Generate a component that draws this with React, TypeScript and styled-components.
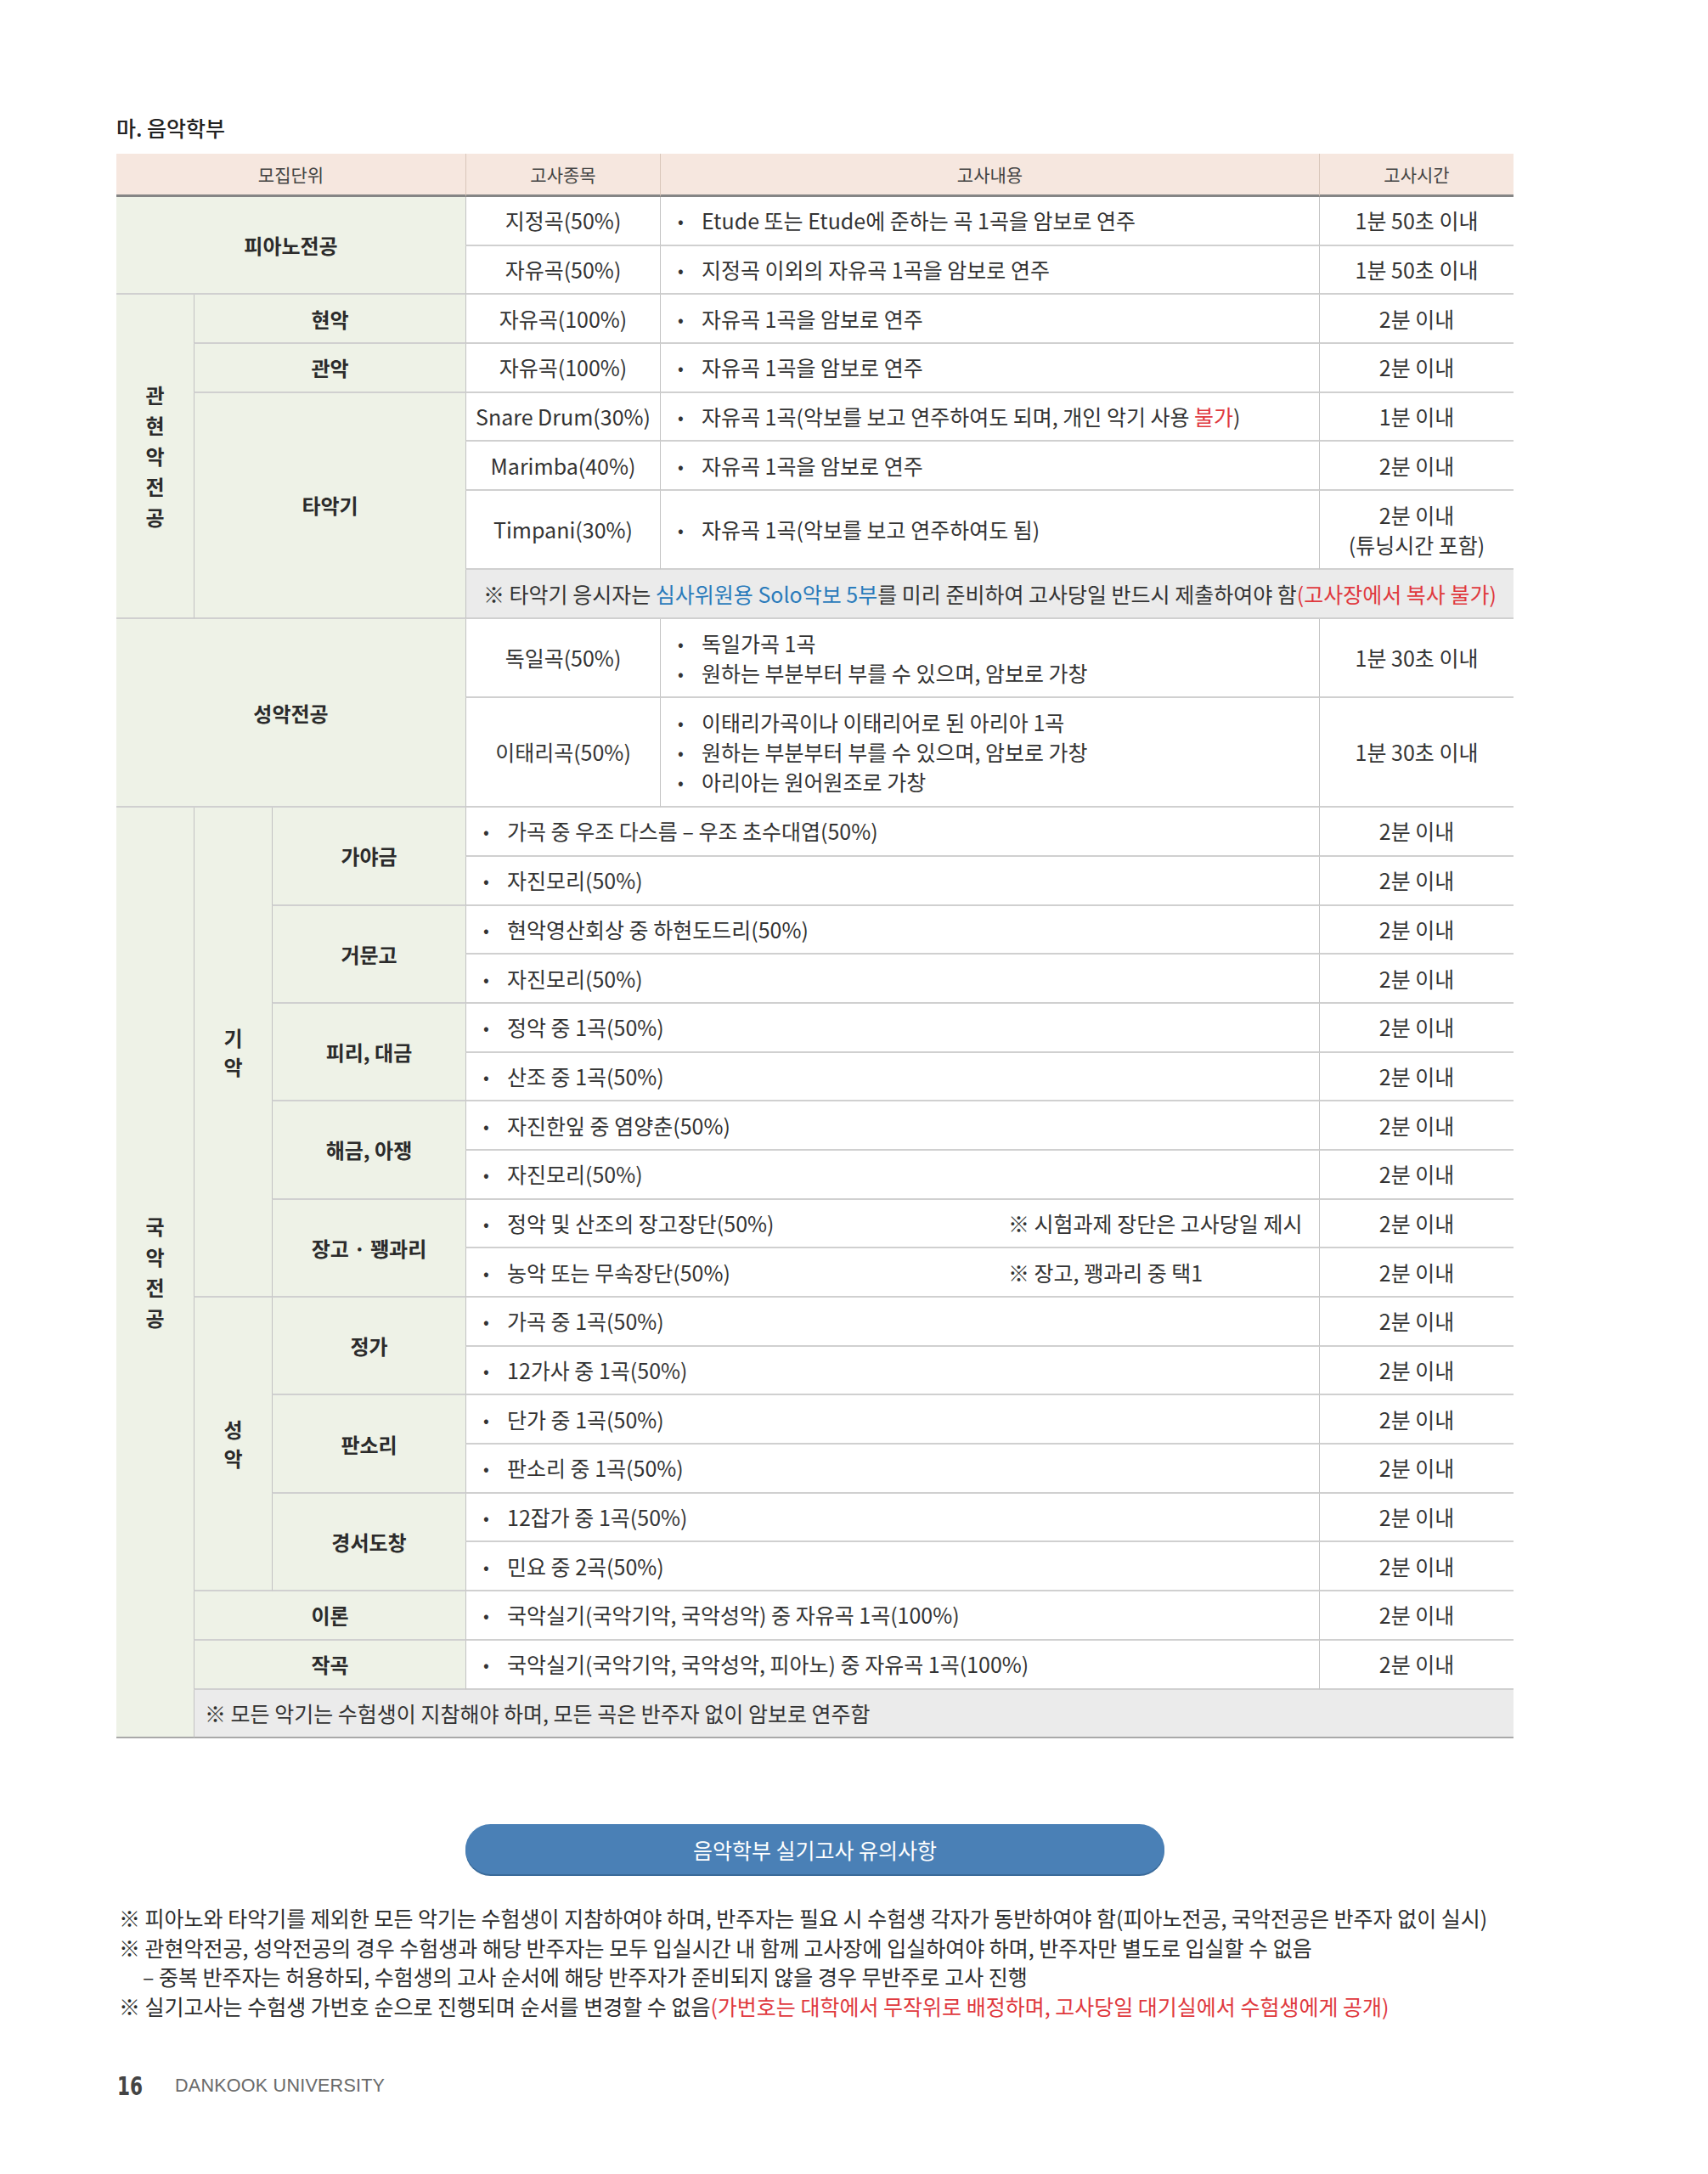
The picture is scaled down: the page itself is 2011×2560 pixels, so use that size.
import React from 'react'
import styled, { createGlobalStyle, css } from 'styled-components'

const GlobalStyle = createGlobalStyle`
  html, body {
    margin: 0;
    padding: 0;
    background: #ffffff;
  }
  body {
    font-family: 'Noto Sans CJK KR', 'Noto Sans', sans-serif;
    color: #333333;
  }
`

type Tone = 'head' | 'label' | 'note' | 'plain'

const LINE = '#d0d0d0'
const VLINE = '#c2c2c2'

const Page = styled.div`
  width: 1645px;
  padding: 133px 0 60px 137px;
`

const Title = styled.h2`
  margin: 0 0 14px;
  font-size: 25px;
  font-weight: 500;
  line-height: 34px;
  color: #222;
`

const Grid = styled.div`
  display: grid;
  grid-template-columns: 91px 92px 228px 229px 776px 229px;
  grid-template-rows: 51px repeat(6, 57.7px) 93px 58px 93px 129px repeat(19, 57.7px);
`

const Cell = styled.div<{ $c: number; $cs?: number; $r: number; $rs?: number; $tone?: Tone; $left?: boolean; $last?: boolean }>`
  box-sizing: border-box;
  grid-column: ${p => p.$c} / span ${p => p.$cs ?? 1};
  grid-row: ${p => p.$r} / span ${p => p.$rs ?? 1};
  display: flex;
  flex-direction: column;
  align-items: ${p => (p.$left ? 'flex-start' : 'center')};
  justify-content: center;
  font-size: 25px;
  line-height: 35px;
  color: #333;
  border-bottom: 2px solid ${LINE};
  border-left: ${p => (p.$c > 1 ? `1px solid ${VLINE}` : 'none')};
  background: #ffffff;
  white-space: nowrap;
  ${p =>
    p.$tone === 'head' &&
    css`
      background: #f6e7df;
      font-size: 21px;
      color: #444;
      border-bottom: 3px solid #858585;
      border-left-color: #d9c6ba;
    `}
  ${p =>
    p.$tone === 'label' &&
    css`
      background: #eef2e7;
      font-weight: 700;
      font-size: 24px;
      color: #2b2b2b;
    `}
  ${p =>
    p.$tone === 'note' &&
    css`
      background: #ebebeb;
    `}
  ${p =>
    p.$last &&
    css`
      border-bottom: 2px solid #a9a9a9;
    `}
`

const Vertical = styled.span<{ $step: number }>`
  display: flex;
  flex-direction: column;
  align-items: center;
  line-height: ${p => p.$step}px;
`

const Item = styled.div`
  display: flex;
  align-items: center;
  padding-left: 20px;
`

const Dot = styled.span`
  width: 28px;
  flex: 0 0 28px;
  font-size: 20px;
`

const Main = styled.span<{ $w?: number }>`
  ${p => p.$w && `width: ${p.$w}px; flex: 0 0 ${p.$w}px;`}
`

const NoteText = styled.div<{ $pad: number }>`
  padding-left: ${p => p.$pad}px;
`

const Red = styled.span`
  color: #e0393e;
`

const Blue = styled.span`
  color: #2a7bbb;
`

const Pill = styled.div`
  margin: 101px auto 0;
  width: 823px;
  height: 59px;
  border-radius: 30px;
  background: #4a80b6;
  box-shadow: 0 2px 0 #3a6a99;
  display: flex;
  align-items: center;
  justify-content: center;
  color: #ffffff;
  font-size: 25px;
`

const Notes = styled.div`
  margin-top: 34px;
  padding-left: 3px;
  font-size: 25px;
  line-height: 34.5px;
  color: #2d2d2d;
`

const NoteLine = styled.div<{ $indent?: boolean }>`
  padding-left: ${p => (p.$indent ? 28 : 0)}px;
  white-space: nowrap;
`

const Footer = styled.div`
  margin-top: 57px;
  display: flex;
  align-items: center;
  height: 40px;
  padding-left: 1px;
`

const PageNo = styled.span`
  font-family: 'Liberation Sans Narrow', 'DejaVu Sans Condensed', 'Liberation Sans', sans-serif;
  font-weight: 700;
  font-size: 30px;
  color: #444;
  width: 68px;
  transform: scaleX(0.8);
  transform-origin: left center;
`

const School = styled.span`
  font-family: 'Liberation Sans', Arial, sans-serif;
  font-size: 21.6px;
  color: #6a6a6a;
  letter-spacing: 0.2px;
`

const Bullet = ({ children, w, aside }: { children: React.ReactNode; w?: number; aside?: string }) => (
  <Item>
    <Dot>•</Dot>
    <Main $w={w}>{children}</Main>
    {aside && <span>{aside}</span>}
  </Item>
)

const gugak: { name: string; rows: [string, string?][] }[] = [
  { name: '가야금', rows: [['가곡 중 우조 다스름 – 우조 초수대엽(50%)'], ['자진모리(50%)']] },
  { name: '거문고', rows: [['현악영산회상 중 하현도드리(50%)'], ['자진모리(50%)']] },
  { name: '피리, 대금', rows: [['정악 중 1곡(50%)'], ['산조 중 1곡(50%)']] },
  { name: '해금, 아쟁', rows: [['자진한잎 중 염양춘(50%)'], ['자진모리(50%)']] },
  {
    name: '장고 · 꽹과리',
    rows: [
      ['정악 및 산조의 장고장단(50%)', '※ 시험과제 장단은 고사당일 제시'],
      ['농악 또는 무속장단(50%)', '※ 장고, 꽹과리 중 택1'],
    ],
  },
  { name: '정가', rows: [['가곡 중 1곡(50%)'], ['12가사 중 1곡(50%)']] },
  { name: '판소리', rows: [['단가 중 1곡(50%)'], ['판소리 중 1곡(50%)']] },
  { name: '경서도창', rows: [['12잡가 중 1곡(50%)'], ['민요 중 2곡(50%)']] },
]

const stacked = (text: string, step: number) => (
  <Vertical $step={step}>
    {text.split('').map((ch, i) => (
      <span key={i}>{ch}</span>
    ))}
  </Vertical>
)

export default function App() {
  return (
    <>
      <GlobalStyle />
      <Page>
        <Title>마. 음악학부</Title>
        <Grid>
          <Cell $c={1} $cs={3} $r={1} $tone="head">모집단위</Cell>
          <Cell $c={4} $r={1} $tone="head">고사종목</Cell>
          <Cell $c={5} $r={1} $tone="head">고사내용</Cell>
          <Cell $c={6} $r={1} $tone="head">고사시간</Cell>

          <Cell $c={1} $cs={3} $r={2} $rs={2} $tone="label">피아노전공</Cell>
          <Cell $c={4} $r={2}>지정곡(50%)</Cell>
          <Cell $c={5} $r={2} $left>
            <Bullet>Etude 또는 Etude에 준하는 곡 1곡을 암보로 연주</Bullet>
          </Cell>
          <Cell $c={6} $r={2}>1분 50초 이내</Cell>
          <Cell $c={4} $r={3}>자유곡(50%)</Cell>
          <Cell $c={5} $r={3} $left>
            <Bullet>지정곡 이외의 자유곡 1곡을 암보로 연주</Bullet>
          </Cell>
          <Cell $c={6} $r={3}>1분 50초 이내</Cell>

          <Cell $c={1} $r={4} $rs={6} $tone="label">{stacked('관현악전공', 36)}</Cell>
          <Cell $c={2} $cs={2} $r={4} $tone="label">현악</Cell>
          <Cell $c={4} $r={4}>자유곡(100%)</Cell>
          <Cell $c={5} $r={4} $left>
            <Bullet>자유곡 1곡을 암보로 연주</Bullet>
          </Cell>
          <Cell $c={6} $r={4}>2분 이내</Cell>
          <Cell $c={2} $cs={2} $r={5} $tone="label">관악</Cell>
          <Cell $c={4} $r={5}>자유곡(100%)</Cell>
          <Cell $c={5} $r={5} $left>
            <Bullet>자유곡 1곡을 암보로 연주</Bullet>
          </Cell>
          <Cell $c={6} $r={5}>2분 이내</Cell>
          <Cell $c={2} $cs={2} $r={6} $rs={4} $tone="label">타악기</Cell>
          <Cell $c={4} $r={6}>Snare Drum(30%)</Cell>
          <Cell $c={5} $r={6} $left>
            <Bullet>
              자유곡 1곡(악보를 보고 연주하여도 되며, 개인 악기 사용 <Red>불가</Red>)
            </Bullet>
          </Cell>
          <Cell $c={6} $r={6}>1분 이내</Cell>
          <Cell $c={4} $r={7}>Marimba(40%)</Cell>
          <Cell $c={5} $r={7} $left>
            <Bullet>자유곡 1곡을 암보로 연주</Bullet>
          </Cell>
          <Cell $c={6} $r={7}>2분 이내</Cell>
          <Cell $c={4} $r={8}>Timpani(30%)</Cell>
          <Cell $c={5} $r={8} $left>
            <Bullet>자유곡 1곡(악보를 보고 연주하여도 됨)</Bullet>
          </Cell>
          <Cell $c={6} $r={8}>
            <span>2분 이내</span>
            <span>(튜닝시간 포함)</span>
          </Cell>
          <Cell $c={4} $cs={3} $r={9} $tone="note" $left>
            <NoteText $pad={20}>
              ※ 타악기 응시자는 <Blue>심사위원용 Solo악보 5부</Blue>를 미리 준비하여 고사당일 반드시 제출하여야
              함<Red>(고사장에서 복사 불가)</Red>
            </NoteText>
          </Cell>

          <Cell $c={1} $cs={3} $r={10} $rs={2} $tone="label">성악전공</Cell>
          <Cell $c={4} $r={10}>독일곡(50%)</Cell>
          <Cell $c={5} $r={10} $left>
            <Bullet>독일가곡 1곡</Bullet>
            <Bullet>원하는 부분부터 부를 수 있으며, 암보로 가창</Bullet>
          </Cell>
          <Cell $c={6} $r={10}>1분 30초 이내</Cell>
          <Cell $c={4} $r={11}>이태리곡(50%)</Cell>
          <Cell $c={5} $r={11} $left>
            <Bullet>이태리가곡이나 이태리어로 된 아리아 1곡</Bullet>
            <Bullet>원하는 부분부터 부를 수 있으며, 암보로 가창</Bullet>
            <Bullet>아리아는 원어원조로 가창</Bullet>
          </Cell>
          <Cell $c={6} $r={11}>1분 30초 이내</Cell>

          <Cell $c={1} $r={12} $rs={19} $tone="label" $last>{stacked('국악전공', 36)}</Cell>
          <Cell $c={2} $r={12} $rs={10} $tone="label">{stacked('기악', 34)}</Cell>
          <Cell $c={2} $r={22} $rs={6} $tone="label">{stacked('성악', 34)}</Cell>
          {gugak.map((g, gi) => {
            const r = 12 + gi * 2
            return (
              <React.Fragment key={g.name}>
                <Cell $c={3} $r={r} $rs={2} $tone="label">{g.name}</Cell>
                {g.rows.map(([text, aside], ri) => (
                  <React.Fragment key={ri}>
                    <Cell $c={4} $cs={2} $r={r + ri} $left>
                      <Bullet w={aside ? 590 : undefined} aside={aside}>
                        {text}
                      </Bullet>
                    </Cell>
                    <Cell $c={6} $r={r + ri}>2분 이내</Cell>
                  </React.Fragment>
                ))}
              </React.Fragment>
            )
          })}
          <Cell $c={2} $cs={2} $r={28} $tone="label">이론</Cell>
          <Cell $c={4} $cs={2} $r={28} $left>
            <Bullet>국악실기(국악기악, 국악성악) 중 자유곡 1곡(100%)</Bullet>
          </Cell>
          <Cell $c={6} $r={28}>2분 이내</Cell>
          <Cell $c={2} $cs={2} $r={29} $tone="label">작곡</Cell>
          <Cell $c={4} $cs={2} $r={29} $left>
            <Bullet>국악실기(국악기악, 국악성악, 피아노) 중 자유곡 1곡(100%)</Bullet>
          </Cell>
          <Cell $c={6} $r={29}>2분 이내</Cell>
          <Cell $c={2} $cs={5} $r={30} $tone="note" $left $last>
            <NoteText $pad={12}>※ 모든 악기는 수험생이 지참해야 하며, 모든 곡은 반주자 없이 암보로 연주함</NoteText>
          </Cell>
        </Grid>

        <Pill>음악학부 실기고사 유의사항</Pill>

        <Notes>
          <NoteLine>
            ※ 피아노와 타악기를 제외한 모든 악기는 수험생이 지참하여야 하며, 반주자는 필요 시 수험생 각자가 동반하여야
            함(피아노전공, 국악전공은 반주자 없이 실시)
          </NoteLine>
          <NoteLine>
            ※ 관현악전공, 성악전공의 경우 수험생과 해당 반주자는 모두 입실시간 내 함께 고사장에 입실하여야 하며, 반주자만
            별도로 입실할 수 없음
          </NoteLine>
          <NoteLine $indent>
            – 중복 반주자는 허용하되, 수험생의 고사 순서에 해당 반주자가 준비되지 않을 경우 무반주로 고사 진행
          </NoteLine>
          <NoteLine>
            ※ 실기고사는 수험생 가번호 순으로 진행되며 순서를 변경할 수 없음
            <Red>(가번호는 대학에서 무작위로 배정하며, 고사당일 대기실에서 수험생에게 공개)</Red>
          </NoteLine>
        </Notes>

        <Footer>
          <PageNo>16</PageNo>
          <School>DANKOOK UNIVERSITY</School>
        </Footer>
      </Page>
    </>
  )
}
